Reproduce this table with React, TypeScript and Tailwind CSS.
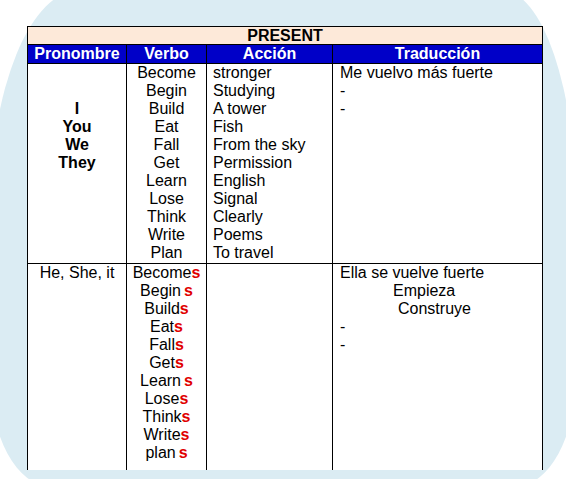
import React from 'react';

const font = { fontFamily: '"Liberation Sans", Arial, sans-serif' };

const verbs = ['Become', 'Begin', 'Build', 'Eat', 'Fall', 'Get', 'Learn', 'Lose', 'Think', 'Write', 'Plan'];
const actions = ['stronger', 'Studying', 'A tower', 'Fish', 'From the sky', 'Permission', 'English', 'Signal', 'Clearly', 'Poems', 'To travel'];

// third person forms, gap = little space the sheet shows before the red s
const thirdPerson = [
  { base: 'Become', gap: false },
  { base: 'Begin', gap: true },
  { base: 'Build', gap: false },
  { base: 'Eat', gap: false },
  { base: 'Fall', gap: false },
  { base: 'Get', gap: false },
  { base: 'Learn', gap: true },
  { base: 'Lose', gap: false },
  { base: 'Think', gap: false },
  { base: 'Write', gap: false },
  { base: 'plan', gap: true },
];

export default function App() {
  return (
    <div className="w-[566px] h-[479px] overflow-hidden bg-white text-black" style={font}>
      <div className="-mt-[10px] -mx-[10px] h-[496px] bg-[#dbecf3] rounded-[90px_75px_60px_60px/220px_220px_110px_110px] pt-[36px] pl-[37px]">
        <div className="w-[516px] h-[444px] flex flex-col bg-white border border-b-0 border-black text-[16px] leading-[18px]">
          <div className="h-[18px] shrink-0 bg-[#fde9d9] border-b border-black text-center font-bold leading-[17px]">
            PRESENT
          </div>

          <div className="h-[19px] shrink-0 flex bg-[#0000c8] text-white font-bold border-b border-black">
            <div className="w-[99px] border-r border-black text-center">Pronombre</div>
            <div className="w-[80px] border-r border-black text-center">Verbo</div>
            <div className="w-[126px] border-r border-black text-center">Acción</div>
            <div className="flex-1 text-center">Traducción</div>
          </div>

          <div className="h-[200px] shrink-0 flex border-b border-black">
            <div className="w-[99px] border-r border-black pt-[36px] text-center font-bold">
              <div>I</div>
              <div>You</div>
              <div>We</div>
              <div>They</div>
            </div>
            <div className="w-[80px] border-r border-black text-center">
              {verbs.map((v) => (
                <div key={v}>{v}</div>
              ))}
            </div>
            <div className="w-[126px] border-r border-black pl-[6px]">
              {actions.map((a) => (
                <div key={a}>{a}</div>
              ))}
            </div>
            <div className="flex-1 pl-[7px]">
              <div>Me vuelvo más fuerte</div>
              <div>-</div>
              <div>-</div>
            </div>
          </div>

          <div className="flex-1 flex">
            <div className="w-[99px] border-r border-black text-center">He, She, it</div>
            <div className="w-[80px] border-r border-black text-center">
              {thirdPerson.map(({ base, gap }) => (
                <div key={base}>
                  {base}
                  <span className={gap ? 'ml-[3px] font-bold text-[#e00000]' : 'font-bold text-[#e00000]'}>s</span>
                </div>
              ))}
            </div>
            <div className="w-[126px] border-r border-black" />
            <div className="flex-1 pl-[7px]">
              <div>Ella se vuelve fuerte</div>
              <div className="pl-[53px]">Empieza</div>
              <div className="pl-[58px]">Construye</div>
              <div>-</div>
              <div>-</div>
            </div>
          </div>
        </div>
      </div>
    </div>
  );
}
